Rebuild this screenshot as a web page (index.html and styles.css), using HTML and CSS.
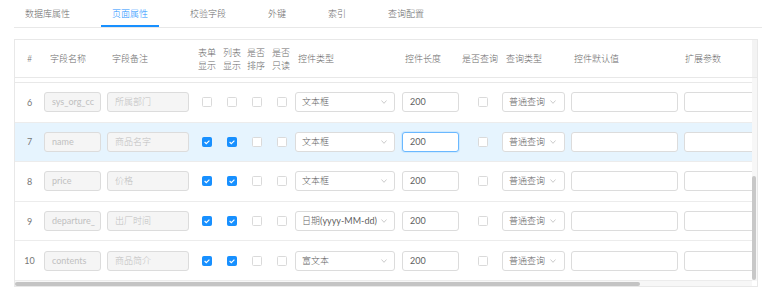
FILE: index.html
```html
<!DOCTYPE html>
<html lang="zh">
<head>
<meta charset="utf-8">
<link rel="stylesheet" href="styles.css">
</head>
<body>
<div class="tabs">
  <div class="tab">数据库属性</div>
  <div class="tab active">页面属性</div>
  <div class="tab">校验字段</div>
  <div class="tab">外键</div>
  <div class="tab">索引</div>
  <div class="tab">查询配置</div>
</div>
<div class="table">
  <div class="main">
    <div class="thead">
      <div class="h h-num">#</div>
      <div class="h h-name">字段名称</div>
      <div class="h h-note">字段备注</div>
      <div class="h h-c1">表单<br>显示</div>
      <div class="h h-c2">列表<br>显示</div>
      <div class="h h-c3">是否<br>排序</div>
      <div class="h h-c4">是否<br>只读</div>
      <div class="h h-type">控件类型</div>
      <div class="h h-len">控件长度</div>
      <div class="h h-q">是否查询</div>
      <div class="h h-qt">查询类型</div>
      <div class="h h-def">控件默认值</div>
      <div class="h h-ext">扩展参数</div>
    </div>
    <div class="tbody">
      <div class="stub"></div>
      <div class="row">
        <div class="num">6</div>
        <div class="inp dis w-name">sys_org_cc</div>
        <div class="inp dis w-note">所属部门</div>
        <div class="cb m-c1"></div>
        <div class="cb m-c2"></div>
        <div class="cb m-c3"></div>
        <div class="cb m-c4"></div>
        <div class="sel w-type"><span class="sel-text">文本框</span><svg class="arrow" width="6" height="4" viewBox="0 0 6 4"><polyline points="0.5,0.5 3,3.3 5.5,0.5" fill="none" stroke="#bfbfbf" stroke-width="0.8"/></svg></div>
        <div class="inp w-len">200</div>
        <div class="cb m-q"></div>
        <div class="sel w-qt"><span class="sel-text">普通查询</span><svg class="arrow" width="6" height="4" viewBox="0 0 6 4"><polyline points="0.5,0.5 3,3.3 5.5,0.5" fill="none" stroke="#bfbfbf" stroke-width="0.8"/></svg></div>
        <div class="inp w-def"></div>
        <div class="inp w-ext"></div>
      </div>
      <div class="row hl">
        <div class="num">7</div>
        <div class="inp dis w-name">name</div>
        <div class="inp dis w-note">商品名字</div>
        <div class="cb on m-c1"><svg width="10" height="10" viewBox="0 0 10 10"><polyline points="2.6,5 4.3,6.6 7.4,3.6" fill="none" stroke="#fff" stroke-width="1.2"/></svg></div>
        <div class="cb on m-c2"><svg width="10" height="10" viewBox="0 0 10 10"><polyline points="2.6,5 4.3,6.6 7.4,3.6" fill="none" stroke="#fff" stroke-width="1.2"/></svg></div>
        <div class="cb m-c3"></div>
        <div class="cb m-c4"></div>
        <div class="sel w-type"><span class="sel-text">文本框</span><svg class="arrow" width="6" height="4" viewBox="0 0 6 4"><polyline points="0.5,0.5 3,3.3 5.5,0.5" fill="none" stroke="#bfbfbf" stroke-width="0.8"/></svg></div>
        <div class="inp focus w-len">200</div>
        <div class="cb m-q"></div>
        <div class="sel w-qt"><span class="sel-text">普通查询</span><svg class="arrow" width="6" height="4" viewBox="0 0 6 4"><polyline points="0.5,0.5 3,3.3 5.5,0.5" fill="none" stroke="#bfbfbf" stroke-width="0.8"/></svg></div>
        <div class="inp w-def"></div>
        <div class="inp w-ext"></div>
      </div>
      <div class="row">
        <div class="num">8</div>
        <div class="inp dis w-name">price</div>
        <div class="inp dis w-note">价格</div>
        <div class="cb on m-c1"><svg width="10" height="10" viewBox="0 0 10 10"><polyline points="2.6,5 4.3,6.6 7.4,3.6" fill="none" stroke="#fff" stroke-width="1.2"/></svg></div>
        <div class="cb on m-c2"><svg width="10" height="10" viewBox="0 0 10 10"><polyline points="2.6,5 4.3,6.6 7.4,3.6" fill="none" stroke="#fff" stroke-width="1.2"/></svg></div>
        <div class="cb m-c3"></div>
        <div class="cb m-c4"></div>
        <div class="sel w-type"><span class="sel-text">文本框</span><svg class="arrow" width="6" height="4" viewBox="0 0 6 4"><polyline points="0.5,0.5 3,3.3 5.5,0.5" fill="none" stroke="#bfbfbf" stroke-width="0.8"/></svg></div>
        <div class="inp w-len">200</div>
        <div class="cb m-q"></div>
        <div class="sel w-qt"><span class="sel-text">普通查询</span><svg class="arrow" width="6" height="4" viewBox="0 0 6 4"><polyline points="0.5,0.5 3,3.3 5.5,0.5" fill="none" stroke="#bfbfbf" stroke-width="0.8"/></svg></div>
        <div class="inp w-def"></div>
        <div class="inp w-ext"></div>
      </div>
      <div class="row">
        <div class="num">9</div>
        <div class="inp dis w-name">departure_</div>
        <div class="inp dis w-note">出厂时间</div>
        <div class="cb on m-c1"><svg width="10" height="10" viewBox="0 0 10 10"><polyline points="2.6,5 4.3,6.6 7.4,3.6" fill="none" stroke="#fff" stroke-width="1.2"/></svg></div>
        <div class="cb on m-c2"><svg width="10" height="10" viewBox="0 0 10 10"><polyline points="2.6,5 4.3,6.6 7.4,3.6" fill="none" stroke="#fff" stroke-width="1.2"/></svg></div>
        <div class="cb m-c3"></div>
        <div class="cb m-c4"></div>
        <div class="sel w-type"><span class="sel-text">日期<span class="lat">(yyyy-MM-dd)</span></span><svg class="arrow" width="6" height="4" viewBox="0 0 6 4"><polyline points="0.5,0.5 3,3.3 5.5,0.5" fill="none" stroke="#bfbfbf" stroke-width="0.8"/></svg></div>
        <div class="inp w-len">200</div>
        <div class="cb m-q"></div>
        <div class="sel w-qt"><span class="sel-text">普通查询</span><svg class="arrow" width="6" height="4" viewBox="0 0 6 4"><polyline points="0.5,0.5 3,3.3 5.5,0.5" fill="none" stroke="#bfbfbf" stroke-width="0.8"/></svg></div>
        <div class="inp w-def"></div>
        <div class="inp w-ext"></div>
      </div>
      <div class="row">
        <div class="num">10</div>
        <div class="inp dis w-name">contents</div>
        <div class="inp dis w-note">商品简介</div>
        <div class="cb on m-c1"><svg width="10" height="10" viewBox="0 0 10 10"><polyline points="2.6,5 4.3,6.6 7.4,3.6" fill="none" stroke="#fff" stroke-width="1.2"/></svg></div>
        <div class="cb on m-c2"><svg width="10" height="10" viewBox="0 0 10 10"><polyline points="2.6,5 4.3,6.6 7.4,3.6" fill="none" stroke="#fff" stroke-width="1.2"/></svg></div>
        <div class="cb m-c3"></div>
        <div class="cb m-c4"></div>
        <div class="sel w-type"><span class="sel-text">富文本</span><svg class="arrow" width="6" height="4" viewBox="0 0 6 4"><polyline points="0.5,0.5 3,3.3 5.5,0.5" fill="none" stroke="#bfbfbf" stroke-width="0.8"/></svg></div>
        <div class="inp w-len">200</div>
        <div class="cb m-q"></div>
        <div class="sel w-qt"><span class="sel-text">普通查询</span><svg class="arrow" width="6" height="4" viewBox="0 0 6 4"><polyline points="0.5,0.5 3,3.3 5.5,0.5" fill="none" stroke="#bfbfbf" stroke-width="0.8"/></svg></div>
        <div class="inp w-def"></div>
        <div class="inp w-ext"></div>
      </div>
    </div>
    <div class="hscroll"><div class="hthumb"></div></div>
  </div>
  <div class="vscroll">
    <div class="vgutter"></div>
    <div class="vtrack"><div class="vthumb"></div></div>
  </div>
</div>
</body>
</html>
```

FILE: styles.css
```css
html, body {
  margin: 0;
  padding: 0;
}
body {
  width: 762px;
  height: 290px;
  overflow: hidden;
  background: #fff;
  font-family: "Lato", "Noto Sans CJK SC", "Noto Sans", sans-serif;
  font-size: 9px;
  font-weight: 300;
  color: #666;
}

.tabs {
  display: flex;
  margin-left: 14px;
  height: 27px;
  border-bottom: 1px solid #e8e8e8;
}
.tab {
  padding: 0 11px;
  margin-right: 20px;
  height: 27px;
  line-height: 27px;
  white-space: nowrap;
  color: #6a6a6a;
}
.tab.active {
  color: #1890ff;
  box-shadow: inset 0 -2px 0 #1890ff;
}

.table {
  display: flex;
  margin: 11px 0 0 14px;
  border: 1px solid #e8e8e8;
  box-sizing: border-box;
  width: 744px;
}
.main {
  width: 737px;
  display: flex;
  flex-direction: column;
  overflow: hidden;
}

.thead {
  display: flex;
  align-items: center;
  height: 37px;
  border-bottom: 1px solid #e8e8e8;
  padding-left: 12px;
  white-space: nowrap;
  color: #6a6a6a;
}
.h { flex: none; line-height: 13px; }
.h-num { width: 23px; }
.h-name { width: 62px; }
.h-note { width: 86px; }
.h-c1 { width: 25px; }
.h-c2 { width: 24px; }
.h-c3 { width: 25px; }
.h-c4 { width: 26px; }
.h-type { width: 107px; }
.h-len { width: 57px; }
.h-q { width: 44px; }
.h-qt { width: 68px; }
.h-def { width: 111px; }
.h-ext { width: 60px; }

.tbody {
  height: 203px;
  overflow: hidden;
}
.stub {
  height: 4px;
  border-bottom: 1px solid #e8e8e8;
}
.row {
  display: flex;
  align-items: center;
  height: 39.6px;
  box-sizing: border-box;
  border-bottom: 1px solid #ececec;
  white-space: nowrap;
}
.row.hl { background: #e6f4fe; }

.num {
  flex: none;
  width: 29px;
  text-align: center;
  color: #777;
  font-weight: 400;
}

.inp, .sel {
  flex: none;
  box-sizing: border-box;
  height: 20px;
  line-height: 18px;
  border: 1px solid #dcdcdc;
  border-radius: 3px;
  background: #fff;
  color: #5f5f5f;
  padding: 0 6px 0 7px;
  overflow: hidden;
}
.inp.dis {
  background: #f5f5f5;
  color: #c0c0c0;
}
.inp.focus {
  border-color: #6ab8ff;
  box-shadow: 0 0 0 1px rgba(24, 144, 255, 0.1);
}
.sel {
  display: flex;
  align-items: center;
  justify-content: space-between;
  gap: 2px;
  padding-left: 6px;
}
.sel-text { overflow: hidden; }
.lat { font-weight: 400; }
.arrow { flex: none; }

.w-name { width: 57px; font-weight: 400; }
.w-note { width: 82px; margin-left: 6px; }
.w-type { width: 100px; margin-left: 8px; padding-right: 7px; }
.w-len { width: 57px; margin-left: 7px; font-weight: 400; }
.w-qt { width: 63px; margin-left: 14px; padding-right: 8px; }
.w-def { width: 107px; margin-left: 6px; }
.w-ext { width: 107px; margin-left: 6px; }

.cb {
  flex: none;
  box-sizing: border-box;
  width: 10px;
  height: 10px;
  border: 1px solid #dadada;
  border-radius: 1.5px;
  background: #fff;
}
.cb.on {
  background: #1890ff;
  border-color: #1890ff;
}
.cb svg {
  display: block;
  margin: -1px;
}
.m-c1 { margin-left: 13px; }
.m-c2 { margin-left: 15px; }
.m-c3 { margin-left: 15px; }
.m-c4 { margin-left: 15px; }
.m-q { margin-left: 19px; }

.hscroll {
  height: 5px;
  background: #f7f7f7;
}
.hthumb {
  width: 625px;
  height: 4px;
  margin-top: 1px;
  border-radius: 2px;
  background: #c4c4c4;
}

.vscroll {
  width: 5px;
  display: flex;
  flex-direction: column;
}
.vgutter {
  height: 37px;
  background: #f3f3f3;
  border-bottom: 1px solid #e8e8e8;
}
.vtrack {
  height: 203px;
  background: #f7f7f7;
}
.vthumb {
  margin-top: 98px;
  height: 104px;
  width: 4px;
  border-radius: 2px;
  background: #c8c8c8;
}
```
